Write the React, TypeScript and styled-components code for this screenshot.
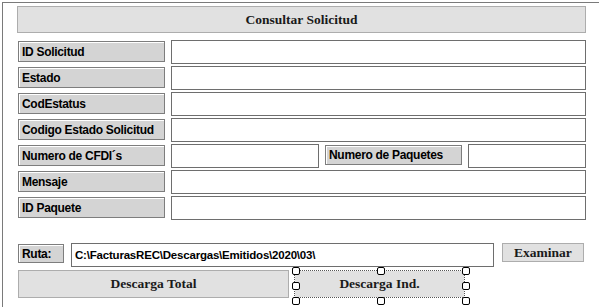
import React from "react";
import styled, { createGlobalStyle } from "styled-components";

const GlobalStyle = createGlobalStyle`
  body {
    margin: 0;
    background: #ffffff;
  }
`;

const fields: string[] = ["ID Solicitud", "Estado", "CodEstatus", "Codigo Estado Solicitud"];
const fieldsAfter: string[] = ["Mensaje", "ID Paquete"];

function App() {
  return (
    <>
      <GlobalStyle />
      <Frame>
        <HeaderButton>Consultar Solicitud</HeaderButton>
        <Rows>
          {fields.map((f) => (
            <Row key={f}>
              <Label>{f}</Label>
              <Field />
            </Row>
          ))}
          <Row>
            <Label>Numero de CFDI´s</Label>
            <SplitRow>
              <Field />
              <Label $narrow>Numero de Paquetes</Label>
              <Field />
            </SplitRow>
          </Row>
          {fieldsAfter.map((f) => (
            <Row key={f}>
              <Label>{f}</Label>
              <Field />
            </Row>
          ))}
        </Rows>
        <PathRow>
          <Label $small>Ruta:</Label>
          <PathField>C:\FacturasREC\Descargas\Emitidos\2020\03\</PathField>
          <SmallButton>Examinar</SmallButton>
        </PathRow>
        <ButtonRow>
          <BigButton>Descarga Total</BigButton>
          <Selected>
            <BigButton>Descarga Ind.</BigButton>
            <Handle style={{ left: -3, top: -4 }} />
            <Handle style={{ left: 82, top: -4 }} />
            <Handle style={{ left: 167, top: -4 }} />
            <Handle style={{ left: -3, top: 11 }} />
            <Handle style={{ left: 167, top: 11 }} />
            <Handle style={{ left: -3, top: 26 }} />
            <Handle style={{ left: 82, top: 26 }} />
            <Handle style={{ left: 167, top: 26 }} />
          </Selected>
        </ButtonRow>
      </Frame>
    </>
  );
}

const Frame = styled.div`
  margin: 2px 0 0 2px;
  height: 305px;
  box-sizing: border-box;
  border-top: 1px solid #7a7a7a;
  border-left: 1px solid #7a7a7a;
  padding: 3px 12px 0 14px;
  display: flex;
  flex-direction: column;
`;

const HeaderButton = styled.div`
  height: 27px;
  width: 569px;
  box-sizing: border-box;
  background: #e1e1e1;
  border: 1px solid #adadad;
  display: flex;
  align-items: center;
  justify-content: center;
  font-family: "Liberation Serif", "DejaVu Serif", serif;
  font-weight: bold;
  font-size: 13.5px;
  color: #1a1a1a;
`;

const Rows = styled.div`
  margin-top: 7px;
  display: flex;
  flex-direction: column;
  gap: 2px;
`;

const Row = styled.div`
  display: grid;
  grid-template-columns: 147px 415px;
  column-gap: 6px;
  height: 24px;
  padding-left: 1px;
`;

const SplitRow = styled.div`
  display: grid;
  grid-template-columns: 148px 137px 118px;
  column-gap: 6px;
`;

const Label = styled.div<{ $narrow?: boolean; $small?: boolean }>`
  height: ${(p) => (p.$narrow ? "20px" : "21px")};
  margin-top: 1px;
  box-sizing: border-box;
  background: #d4d4d4;
  border: 1px solid #7d7d7d;
  box-shadow: inset 1px 1px 0 #ffffff;
  padding-left: 3px;
  display: flex;
  align-items: center;
  font-family: "Liberation Sans", Arial, sans-serif;
  font-weight: bold;
  font-size: 12px;
  letter-spacing: -0.3px;
  color: #000000;
  white-space: nowrap;
  overflow: hidden;
`;

const Field = styled.div`
  height: 24px;
  box-sizing: border-box;
  background: #ffffff;
  border: 1px solid #6e6e6e;
`;

const PathRow = styled.div`
  margin-top: 23px;
  display: grid;
  grid-template-columns: 46px 424px 84px;
  column-gap: 6px;
  height: 24px;
  padding-left: 1px;
  & > div:first-child {
    height: 19px;
  }
`;

const PathField = styled.div`
  height: 24px;
  box-sizing: border-box;
  border: 1px solid #6e6e6e;
  background: #ffffff;
  padding-left: 3px;
  display: flex;
  align-items: center;
  font-family: "Liberation Sans", Arial, sans-serif;
  font-weight: bold;
  font-size: 11.5px;
  letter-spacing: -0.2px;
  color: #000000;
  margin-left: 1px;
`;

const SmallButton = styled.div`
  height: 19px;
  margin-left: 2px;
  box-sizing: border-box;
  background: #e1e1e1;
  border: 1px solid #adadad;
  display: flex;
  align-items: center;
  justify-content: center;
  font-family: "Liberation Serif", "DejaVu Serif", serif;
  font-weight: bold;
  font-size: 13.5px;
  color: #1a1a1a;
`;

const ButtonRow = styled.div`
  margin-top: 3px;
  display: flex;
  gap: 5px;
  padding-left: 1px;
`;

const BigButton = styled.div`
  width: 271px;
  height: 28px;
  box-sizing: border-box;
  background: #e1e1e1;
  border: 1px solid #adadad;
  display: flex;
  align-items: center;
  justify-content: center;
  font-family: "Liberation Serif", "DejaVu Serif", serif;
  font-weight: bold;
  font-size: 13.5px;
  color: #1a1a1a;
`;

const Selected = styled.div`
  position: relative;
  width: 171px;
  height: 28px;
  box-sizing: border-box;
  border: 1px dotted #555555;
  & > div:first-child {
    width: 100%;
    height: 100%;
    border: none;
  }
`;

const Handle = styled.div`
  position: absolute;
  width: 6px;
  height: 6px;
  background: #ffffff;
  border: 1px solid #000000;
  border-radius: 2px;
`;

export default App;
